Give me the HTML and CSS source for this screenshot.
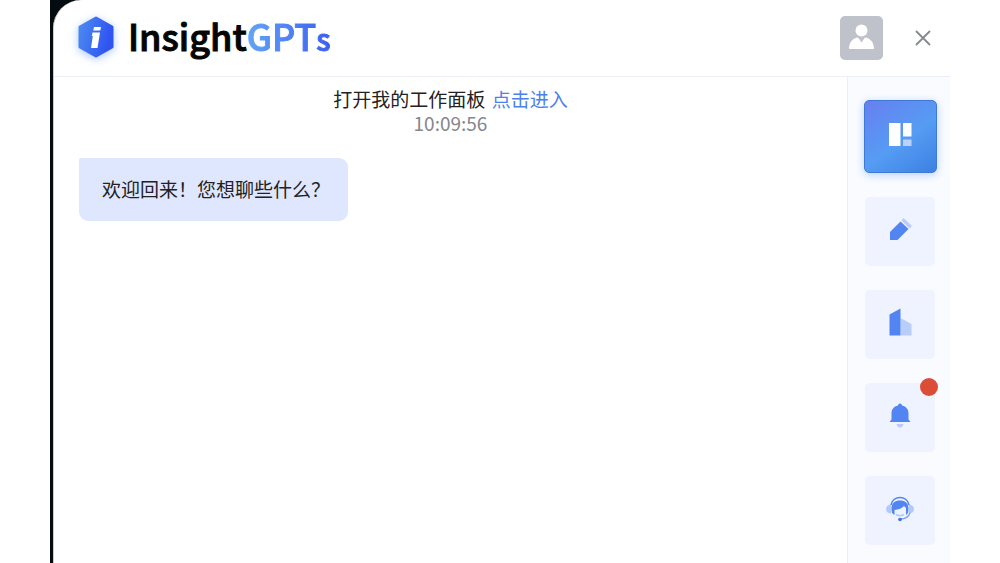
FILE: index.html
```html
<!DOCTYPE html>
<html lang="zh-CN">
<head>
<meta charset="utf-8">
<title>InsightGPTs</title>
<link rel="stylesheet" href="styles.css">
</head>
<body>
<div class="backdrop">
  <div class="panel">
    <header class="header">
      <h1 class="brand">
        <svg class="brand-mark" viewBox="0 0 38 42" aria-hidden="true">
          <defs><linearGradient id="hex" x1="0" y1="0" x2="1" y2="0.3"><stop offset="0" stop-color="#4c8cf0"/><stop offset="1" stop-color="#3053f2"/></linearGradient></defs>
          <path d="M19 2 35 11V31L19 40 3 31V11Z" fill="url(#hex)" stroke="url(#hex)" stroke-width="3" stroke-linejoin="round"/>
          <path d="M17 11h7l-.7 3.500h-7zM15.500 16.500h7.500l-2.500 15.500h-6.500l1.800-12h-1z" fill="#fff"/>
        </svg>
        <span class="brand-name">Insight<span class="brand-accent">GPT<span class="brand-small">s</span></span></span>
      </h1>
      <div class="actions">
        <button class="avatar" type="button" aria-label="用户">
          <svg viewBox="0 0 43 44" aria-hidden="true"><circle cx="21.500" cy="14.500" r="6" fill="#fff"/><path d="M9 33c0-6 3-10 8-11.500q1.500 0 2.500 2l2 3 2-3q1-2 2.500-2c5 1.500 8 5.500 8 11.500z" fill="#fff"/></svg>
        </button>
        <button class="close" type="button" aria-label="关闭">
          <svg viewBox="0 0 16 16" aria-hidden="true"><path d="M1 1 15 15M15 1 1 15" stroke="#85888f" stroke-width="1.800"/></svg>
        </button>
      </div>
    </header>
    <div class="body">
      <main class="chat">
        <p class="notice">打开我的工作面板 <a class="link" href="#">点击进入</a></p>
        <time class="time">10:09:56</time>
        <div class="bubble">欢迎回来！您想聊些什么？</div>
      </main>
      <nav class="sidebar" aria-label="工具">
        <button class="tool tool-active" type="button" aria-label="面板">
          <svg viewBox="0 0 28 28" aria-hidden="true"><path d="M3 2h11.500v23H3z" fill="#fff"/><path d="M17 2h8.500v13.500H17z" fill="#fff"/><path d="M17 18.500h8.500V25H17z" fill="#bdd2fb"/></svg>
        </button>
        <button class="tool" type="button" aria-label="编辑">
          <svg viewBox="0 0 28 28" aria-hidden="true"><path d="m14.500 5.500 8 7.500-11 11H4V16z" fill="#5284f2"/><path d="m15.500 4.500 2-2.500 8.500 8-2.500 2.500z" fill="#b9ccfa"/></svg>
        </button>
        <button class="tool" type="button" aria-label="企业">
          <svg viewBox="0 0 28 28" aria-hidden="true"><path d="M14.500 9 25.500 15v11.500h-11z" fill="#b9cdfb"/><path d="M3.500 5.500 14.500-.5v27h-11z" fill="#5284f2"/></svg>
        </button>
        <button class="tool" type="button" aria-label="通知">
          <svg viewBox="0 0 28 28" aria-hidden="true"><path d="M14 1.500q1.800 0 2 2c4.500 1 6.500 4 6.500 8v6l2 2.500h-21l2-2.500v-6c0-4 2-7 6.500-8q.2-2 2-2z" fill="#5284f2"/><path d="M10.500 22h7q-1 3.500-3.500 3.500t-3.500-3.500z" fill="#b9ccfa"/></svg>
          <span class="badge"></span>
        </button>
        <button class="tool" type="button" aria-label="客服">
          <svg viewBox="0 0 28 28" aria-hidden="true"><path d="M5 9.500v9q-5-.5-5-4.500t5-4.500zM23 9.500v9q5-.5 5-4.500t-5-4.500z" fill="#b4c9fb"/><path d="M5 10C7 0 21 0 23 10" fill="none" stroke="#5284f2" stroke-width="1.600"/><path d="M6 18C4 9 8 5.500 14 5.500S24 9 22 18l-2 2v-7l-2-2q-3 3.500-9.500 4v5z" fill="#5284f2"/><path d="M10 19.500q4 2.500 8 0" fill="none" stroke="#b4c9fb" stroke-width="1.500"/><path d="M24 17.500c-1 4-5 6.500-10 6.500" fill="none" stroke="#7ea1f5" stroke-width="1.300"/><circle cx="14" cy="24.500" r="1.800" fill="#3f70dd"/></svg>
        </button>
      </nav>
    </div>
  </div>
</div>
</body>
</html>
```
FILE: styles.css
```css
* {
  box-sizing: border-box;
}

body {
  margin: 0;
  background: #fff;
  color: #222;
  font-family: "Noto Sans CJK SC", "Noto Sans", sans-serif;
  font-size: 19px;
  line-height: 24px;
}

button {
  padding: 0;
  border: 0;
  background: none;
  cursor: pointer;
}

svg {
  display: block;
}

.backdrop {
  height: 100vh;
  margin: 0 5%;
  padding-left: 3px;
  overflow: hidden;
  background: #050c10;
}

.panel {
  display: flex;
  flex-direction: column;
  height: 100%;
  overflow: hidden;
  border-left: 1px solid #c9cbce;
  border-top-left-radius: 28px;
  background: #fff;
}

.header {
  display: flex;
  align-items: center;
  justify-content: space-between;
  height: 77px;
  flex: none;
  padding: 0 16px 0 23px;
  border-bottom: 1px solid #eceef8;
}

.brand {
  display: flex;
  align-items: center;
  gap: 13px;
  margin: 0;
  padding-bottom: 3px;
  font-size: 36px;
  font-weight: 500;
  line-height: 48px;
  color: #050505;
}

.brand-mark {
  width: 38px;
  height: 42px;
  filter: drop-shadow(0 2px 4px #a9c8ff);
}

.brand-name {
  -webkit-text-stroke: 1px #050505;
}

.brand-accent {
  background: linear-gradient(90deg, #62a5f5, #3d5ef0);
  background-clip: text;
  -webkit-background-clip: text;
  -webkit-text-stroke: 1px transparent;
  color: transparent;
}

.brand-small {
  font-size: 30px;
}

.actions {
  display: flex;
  align-items: center;
  gap: 29px;
}

.avatar {
  width: 43px;
  height: 44px;
  border-radius: 5px;
  background: #bfc2ca;
}

.close {
  padding: 3px;
}

.close svg {
  width: 16px;
  height: 16px;
}

.body {
  display: flex;
  flex: 1;
  min-height: 0;
}

.chat {
  display: flex;
  flex: 1;
  flex-direction: column;
  align-items: center;
  padding: 10px 25px;
}

.notice {
  margin: 0;
}

.link {
  margin-left: 2px;
  color: #4c80ee;
  text-decoration: none;
}

.time {
  color: #85878b;
}

.bubble {
  align-self: flex-start;
  margin-top: 23px;
  padding: 19px 18px 20px 23px;
  border-radius: 2px 9px 9px 9px;
  background: #dfe7ff;
}

.sidebar {
  display: flex;
  flex-direction: column;
  align-items: center;
  gap: 24px;
  width: 103px;
  flex: none;
  padding: 23px 0 0 2px;
  border-left: 1px solid #eceef6;
  background: #f9fbff;
}

.tool {
  position: relative;
  display: flex;
  align-items: center;
  justify-content: center;
  flex: none;
  width: 70px;
  height: 69px;
  padding-bottom: 4px;
  border-radius: 5px;
  background: #eef3ff;
}

.tool svg {
  width: 28px;
  height: 28px;
  overflow: visible;
}

.tool-active {
  width: 73px;
  height: 73px;
  border: 1px solid #3e79d6;
  background: linear-gradient(145deg, #687ff0 0%, #559cf4 55%, #3c80e2 100%);
  box-shadow: 0 2px 8px #b8d0ff;
}

.badge {
  position: absolute;
  top: -5px;
  right: -3px;
  width: 18px;
  height: 18px;
  border-radius: 50%;
  background: #dc4d38;
}
```
